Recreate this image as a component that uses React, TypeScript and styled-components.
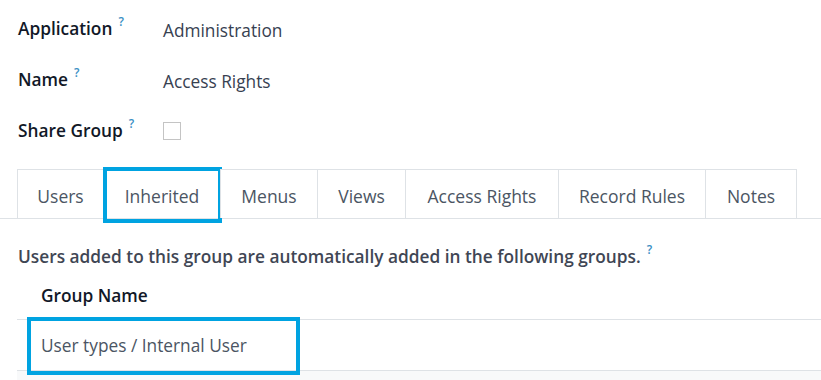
import React from "react";
import styled, { createGlobalStyle } from "styled-components";

const Global = createGlobalStyle`
  html, body { margin: 0; padding: 0; background: #fff; }
  body { font-family: "Open Sans", "Noto Sans", sans-serif; color: #374151; }
`;

const Page = styled.div`
  width: 821px;
  height: 380px;
  overflow: hidden;
  display: flex;
  flex-direction: column;
  & > * { flex-shrink: 0; }
`;

const Fields = styled.div`
  display: flex;
  flex-direction: column;
  padding: 3px 0 0 18px;
`;

const FieldRow = styled.div`
  display: grid;
  grid-template-columns: 145px 1fr;
  align-items: center;
  height: 51px;
`;

const Label = styled.div`
  font-weight: 600;
  font-size: 17.3px;
  color: #111827;
`;

const Help = styled.sup`
  color: #3b8fc4;
  font-size: 12px;
  font-weight: 600;
  margin-left: 6px;
  vertical-align: 9px;
  line-height: 0;
`;

const Value = styled.div`
  font-size: 17.3px;
  color: #374151;
  padding-top: 3px;
`;

const Checkbox = styled.span`
  display: block;
  width: 16px;
  height: 16px;
  border: 1px solid #c4c4c4;
  background: #fff;
`;

const TabBar = styled.div`
  display: flex;
  padding-left: 17px;
  margin-top: 13px;
  border-bottom: 1px solid #dee2e6;
  height: 49px;
`;

const Tab = styled.div<{ $active?: boolean; $w: number }>`
  position: relative;
  box-sizing: border-box;
  width: ${(p) => p.$w}px;
  border: 1px solid #dee2e6;
  border-bottom: none;
  margin-left: -1px;
  &:first-child { margin-left: 0; }
  display: flex;
  align-items: center;
  justify-content: center;
  font-size: 17.5px;
  color: #4b5563;
  background: #fff;
  padding-top: 4px;
  ${(p) =>
    p.$active &&
    `
    &::after {
      content: "";
      position: absolute;
      left: -1px;
      right: -2px;
      top: -3px;
      bottom: -5px;
      border: 4px solid #00a3e1;
    }
  `}
`;

const Description = styled.div`
  font-size: 17.3px;
  font-weight: 600;
  color: #3f4654;
  padding: 26px 0 0 18px;
`;

const Table = styled.div`
  margin-left: 17px;
  margin-top: 4px;
  display: flex;
  flex-direction: column;
`;

const HeadCell = styled.div`
  font-size: 17.3px;
  font-weight: 600;
  color: #111827;
  padding: 0 0 0 24px;
  height: 47px;
  display: flex;
  align-items: center;
  border-bottom: 1px solid #dee2e6;
`;

const Cell = styled.div`
  position: relative;
  font-size: 17.3px;
  color: #4b5563;
  padding-left: 24px;
  height: 50px;
  display: flex;
  align-items: center;
  border-bottom: 1px solid #dee2e6;
  &::after {
    content: "";
    position: absolute;
    left: 10px;
    width: 273px;
    top: -3px;
    bottom: -5px;
    box-sizing: border-box;
    border: 4px solid #00a3e1;
  }
`;

const Footer = styled.div`
  flex: 1;
  background: #f8f9fa;
  min-height: 20px;
`;

const tabs: [string, number][] = [
  ["Users", 87],
  ["Inherited", 118],
  ["Menus", 98],
  ["Views", 89],
  ["Access Rights", 154],
  ["Record Rules", 148],
  ["Notes", 92],
];

export default function App() {
  return (
    <Page>
      <Global />
      <Fields>
        <FieldRow>
          <Label>
            Application<Help>?</Help>
          </Label>
          <Value>Administration</Value>
        </FieldRow>
        <FieldRow>
          <Label>
            Name<Help>?</Help>
          </Label>
          <Value>Access Rights</Value>
        </FieldRow>
        <FieldRow>
          <Label>
            Share Group<Help>?</Help>
          </Label>
          <Checkbox />
        </FieldRow>
      </Fields>
      <TabBar>
        {tabs.map(([t, w]) => (
          <Tab key={t} $w={w} $active={t === "Inherited"}>
            {t}
          </Tab>
        ))}
      </TabBar>
      <Description>
        Users added to this group are automatically added in the following groups.
        <Help>?</Help>
      </Description>
      <Table>
        <HeadCell>Group Name</HeadCell>
        <Cell>User types / Internal User</Cell>
        <Footer />
      </Table>
    </Page>
  );
}
